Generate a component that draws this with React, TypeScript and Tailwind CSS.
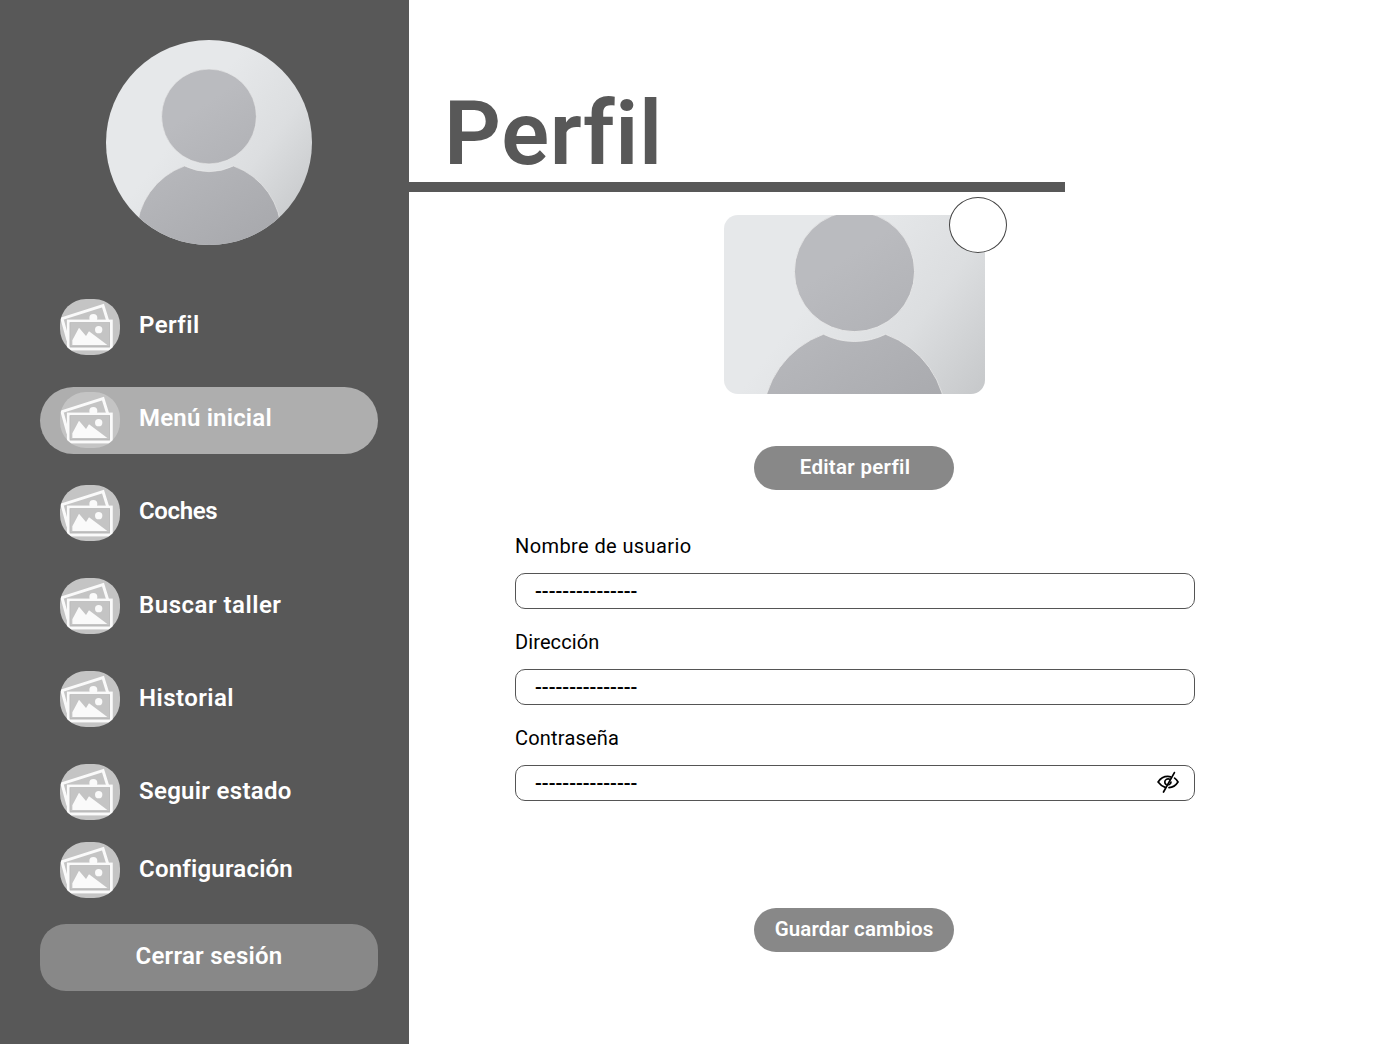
import { useId } from "react";

function Avatar({ className }: { className: string }) {
  const id = useId();
  return (
    <svg viewBox="0 0 206 206" preserveAspectRatio="xMidYMid slice" className={className} aria-hidden="true">
      <defs>
        <linearGradient id={id + "bg"} gradientUnits="userSpaceOnUse" x1="90" y1="70" x2="215" y2="165">
          <stop offset="0" stopColor="#e6e8ea" />
          <stop offset="0.5" stopColor="#dcdee0" />
          <stop offset="1" stopColor="#c5c7c9" />
        </linearGradient>
        <linearGradient id={id + "fg"} gradientUnits="userSpaceOnUse" x1="90" y1="70" x2="170" y2="190">
          <stop offset="0" stopColor="#babbbf" />
          <stop offset="1" stopColor="#a8a9ad" />
        </linearGradient>
      </defs>
      <rect width="206" height="206" fill={`url(#${id}bg)`} />
      <g fill={`url(#${id}fg)`} stroke="#eceded" strokeWidth="0.6">
        <circle cx="103" cy="77" r="47.4" />
        <path d="M30.6 206V194.6A72.4 72.4 0 0 1 78.5 126.5A55.5 55.5 0 0 0 127.5 126.5A72.4 72.4 0 0 1 175.4 194.6V206Z" />
      </g>
    </svg>
  );
}

function Pictures() {
  return (
    <svg viewBox="0 0 180 168" className="mb-[2px] h-14 w-[60px] shrink-0 rounded-[26px] bg-[#c4c4c4]" aria-hidden="true">
      <path d="M24 124L6 59L129 20L143 65" fill="none" stroke="#fafafa" strokeWidth="9" />
      <circle cx="100" cy="57" r="12" fill="#fafafa" />
      <rect x="25" y="66" width="129" height="84" fill="#c4c4c4" stroke="#fafafa" strokeWidth="8.5" />
      <rect x="30" y="71" width="119" height="71" fill="none" stroke="#b8b8b8" strokeWidth="2" />
      <path d="M37 138V124L57 86L78 111L87 97L142 138Z" fill="#fafafa" />
      <circle cx="116" cy="92" r="11" fill="#fafafa" />
    </svg>
  );
}

function EyeOff() {
  return (
    <svg viewBox="0 0 24 24" className="mr-[14px] mb-[2px] size-6" fill="none" stroke="#000" strokeWidth="1.7" strokeLinecap="round" aria-hidden="true">
      <path d="M9.2 17.4C6.2 16.4 3.9 14.4 2.1 12C4.3 8.6 7.8 6.4 11.8 6.4C12.8 6.4 13.7 6.5 14.6 6.9M18.6 8.1C20 9.1 21.1 10.4 22 12C19.9 15.3 16.8 17.5 13 17.7" />
      <path d="M13.8 9.2C11.2 8.2 8.8 9.7 8.8 12C8.8 13.2 9.3 14 10.1 14.5M15 12C15 13.4 14.1 14.4 12.9 14.8" />
      <path d="M18.4 2.6L7.5 22" />
    </svg>
  );
}

const items = [
  { label: "Perfil", row: "", text: "tracking-[0.45px] mb-[5px]" },
  { label: "Menú inicial", row: "mt-[26px] bg-[#aeaeae]", text: "tracking-[0.2px] mb-[5px]" },
  { label: "Coches", row: "mt-[26px]", text: "tracking-[-0.35px] mb-[5px]" },
  { label: "Buscar taller", row: "mt-[26px]", text: "tracking-[0.5px] mb-[3px]" },
  { label: "Historial", row: "mt-[26px]", text: "tracking-[0.45px] mb-[3px]" },
  { label: "Seguir estado", row: "mt-[26px]", text: "tracking-[0.3px] mb-[3px]" },
  { label: "Configuración", row: "mt-[11px]", text: "tracking-[0.2px] mb-[3px]" },
];

const fields = [
  { label: "Nombre de usuario", text: "tracking-[0.4px]", secret: false },
  { label: "Dirección", text: "tracking-[0.1px]", secret: false },
  { label: "Contraseña", text: "tracking-[0.2px]", secret: true },
];

export default function App() {
  return (
    <div className="flex h-[1044px] w-full overflow-hidden bg-white font-['Roboto',sans-serif]">
      <aside className="flex w-[409px] shrink-0 flex-col bg-[#585858] pt-10 pr-[31px] pl-10">
        <Avatar className="ml-[66px] h-[205px] w-[206px] shrink-0 rounded-[50%]" />
        <nav className="mt-[49px] flex flex-col">
          {items.map((item) => (
            <a key={item.label} className={`flex h-[67px] items-center rounded-full pl-5 text-2xl font-semibold text-white ${item.row}`}>
              <Pictures />
              <span className={`ml-[19px] whitespace-nowrap ${item.text}`}>{item.label}</span>
            </a>
          ))}
        </nav>
        <button className="mt-5 flex h-[67px] shrink-0 items-center justify-center rounded-[26px] bg-[#888] pb-[3px] text-2xl font-semibold tracking-[0.25px] text-white">
          Cerrar sesión
        </button>
      </aside>
      <main className="flex min-w-0 flex-1 flex-col">
        <h1 className="mt-[84px] ml-[35px] h-[98px] text-[89px] leading-[100px] font-semibold tracking-[0.6px] text-[#585858]">Perfil</h1>
        <div className="h-[10px] w-[656px] bg-[#585858]" />
        <div className="ml-[106px] flex w-[680px] flex-col items-center">
          <div className="relative mt-[23px] mr-[2px] h-[179px] w-[261px]">
            <Avatar className="h-full w-full rounded-[14px]" />
            <div className="absolute -top-[18px] left-[225px] h-14 w-[58px] rounded-[50%] border border-[#444] bg-white" />
          </div>
          <button className="mt-[52px] mr-[2px] h-11 w-[200px] rounded-full bg-[#888] pb-[2px] pl-[2px] text-[20.5px] font-semibold tracking-[0.3px] text-white">Editar perfil</button>
          <form className="mt-[41px] flex w-full flex-col">
            {fields.map((f) => (
              <label key={f.label} className="flex h-24 flex-col text-xl text-black">
                <span className={`h-[42px] leading-[31px] ${f.text}`}>{f.label}</span>
                <span className="flex h-9 items-center justify-between rounded-[10px] border border-[#555] pl-[19px]">
                  <span className="font-medium tracking-[0.03px]">---------------</span>
                  {f.secret && <EyeOff />}
                </span>
              </label>
            ))}
          </form>
          <button className="mt-[89px] mr-[2px] h-11 w-[200px] rounded-full bg-[#888] pb-[2px] text-[20.5px] font-semibold tracking-[0.1px] text-white">Guardar cambios</button>
        </div>
      </main>
    </div>
  );
}
